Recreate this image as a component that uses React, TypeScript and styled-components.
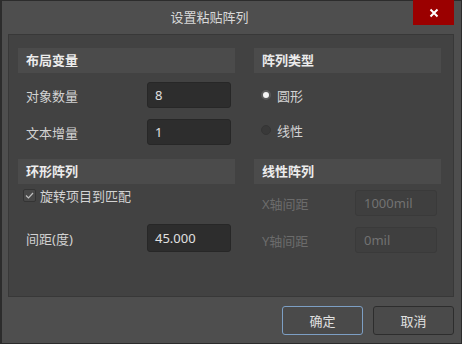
import React from "react";
import styled, { createGlobalStyle } from "styled-components";

const Global = createGlobalStyle`
  html, body { margin: 0; padding: 0; background: #4e4e4e; }
  body { font-family: "Noto Sans", "Noto Sans CJK SC", sans-serif; }
  * { box-sizing: border-box; }
`;

const Window = styled.div`
  width: 462px;
  height: 344px;
  background: #4e4e4e;
  border: 1px solid #2c2c2c;
  border-left-width: 2px;
  display: flex;
  flex-direction: column;
`;

const TitleBar = styled.div`
  height: 33px;
  display: flex;
  align-items: flex-start;
`;

const Title = styled.div`
  flex: 1;
  text-align: center;
  color: #d8d8d8;
  font-size: 13px;
  line-height: 33px;
  padding-left: 4px;
`;

const CloseButton = styled.div`
  width: 41px;
  height: 25px;
  margin-top: -1px;
  margin-right: 7px;
  background: #9b0000;
  display: flex;
  align-items: center;
  justify-content: center;
`;

const Panel = styled.div`
  margin: 0 7px 0 6px;
  height: 263px;
  background: #424242;
  border: 1px solid #383838;
  padding: 13px 12px 0 9px;
  display: grid;
  grid-template-columns: 217px 187px;
  column-gap: 19px;
  align-items: start;
`;

const Column = styled.div`
  display: flex;
  flex-direction: column;
`;

const Header = styled.div<{ $mt?: number }>`
  height: 25px;
  margin-top: ${(p) => p.$mt ?? 0}px;
  background: #4b4b4b;
  color: #ececec;
  font-weight: bold;
  font-size: 13px;
  line-height: 25px;
  padding-left: 8px;
`;

const Row = styled.div<{ $mt: number; $h?: number }>`
  margin-top: ${(p) => p.$mt}px;
  height: ${(p) => p.$h ?? 26}px;
  display: flex;
  align-items: center;
  justify-content: space-between;
  padding-left: 8px;
  padding-right: 4px;
`;

const Label = styled.span<{ $disabled?: boolean }>`
  font-size: 13px;
  color: ${(p) => (p.$disabled ? "#6c6c6c" : "#d2d2d2")};
`;

const Input = styled.div<{ $disabled?: boolean; $w?: number }>`
  width: ${(p) => p.$w ?? 84}px;
  height: 100%;
  border-radius: 3px;
  background: ${(p) => (p.$disabled ? "#3f3f3f" : "#2d2d2d")};
  border: 1px solid ${(p) => (p.$disabled ? "#3a3a3a" : "#272727")};
  color: ${(p) => (p.$disabled ? "#727272" : "#e0e0e0")};
  font-size: 13px;
  display: flex;
  align-items: center;
  padding-left: ${(p) => (p.$disabled ? 8 : 7)}px;
`;

const OptionRow = styled.label<{ $mt: number }>`
  margin-top: ${(p) => p.$mt}px;
  height: 26px;
  display: flex;
  align-items: center;
  gap: 5px;
  padding-left: 6px;
  font-size: 13px;
  color: #d2d2d2;
`;

const Radio = styled.span<{ $on?: boolean }>`
  width: 10px;
  height: 10px;
  border-radius: 50%;
  background: ${(p) => (p.$on ? "#f6f6f6" : "#393939")};
  border: ${(p) => (p.$on ? "2px solid #5a5a5a" : "1px solid #353535")};
  margin-left: 1px;
  margin-right: 1px;
`;

const CheckRow = styled.label`
  margin-top: 4px;
  height: 15px;
  display: flex;
  align-items: center;
  gap: 4px;
  padding-left: 5px;
  font-size: 13px;
  color: #d2d2d2;
`;

const CheckBox = styled.span`
  width: 13px;
  height: 13px;
  border-radius: 2px;
  background: #484848;
  border: 1px solid #343434;
  display: flex;
  align-items: center;
  justify-content: center;
`;

const Footer = styled.div`
  display: flex;
  justify-content: flex-end;
  gap: 10px;
  padding: 9px 7px 0 0;
`;

const Button = styled.div<{ $primary?: boolean }>`
  width: 81px;
  height: 29px;
  border-radius: 3px;
  background: #4a4a4a;
  border: 1px solid ${(p) => (p.$primary ? "#7d9fc4" : "#2d2d2d")};
  color: #e0e0e0;
  font-size: 13px;
  display: flex;
  align-items: center;
  justify-content: center;
`;

export default function App() {
  return (
    <>
      <Global />
      <Window>
        <TitleBar>
          <Title>设置粘贴阵列</Title>
          <CloseButton>
            <svg width="10" height="10" viewBox="0 0 10 10">
              <path d="M1.5 1.5 L8.5 8.5 M8.5 1.5 L1.5 8.5" stroke="#ffffff" strokeWidth="2" />
            </svg>
          </CloseButton>
        </TitleBar>
        <Panel>
          <Column>
            <Header>布局变量</Header>
            <Row $mt={9}>
              <Label>对象数量</Label>
              <Input>8</Input>
            </Row>
            <Row $mt={11}>
              <Label>文本增量</Label>
              <Input>1</Input>
            </Row>
            <Header $mt={14}>环形阵列</Header>
            <CheckRow>
              <CheckBox>
                <svg width="9" height="7" viewBox="0 0 9 7">
                  <path d="M1 3.5 L3.5 6 L8 1" stroke="#c0c0c0" strokeWidth="1.2" fill="none" />
                </svg>
              </CheckBox>
              旋转项目到匹配
            </CheckRow>
            <Row $mt={21} $h={28}>
              <Label>间距(度)</Label>
              <Input>45.000</Input>
            </Row>
          </Column>
          <Column>
            <Header>阵列类型</Header>
            <OptionRow $mt={9}>
              <Radio $on />
              圆形
            </OptionRow>
            <OptionRow $mt={9}>
              <Radio />
              线性
            </OptionRow>
            <Header $mt={16}>线性阵列</Header>
            <Row $mt={6}>
              <Label $disabled>X轴间距</Label>
              <Input $disabled $w={82}>1000mil</Input>
            </Row>
            <Row $mt={11}>
              <Label $disabled>Y轴间距</Label>
              <Input $disabled $w={82}>0mil</Input>
            </Row>
          </Column>
        </Panel>
        <Footer>
          <Button $primary>确定</Button>
          <Button>取消</Button>
        </Footer>
      </Window>
    </>
  );
}
